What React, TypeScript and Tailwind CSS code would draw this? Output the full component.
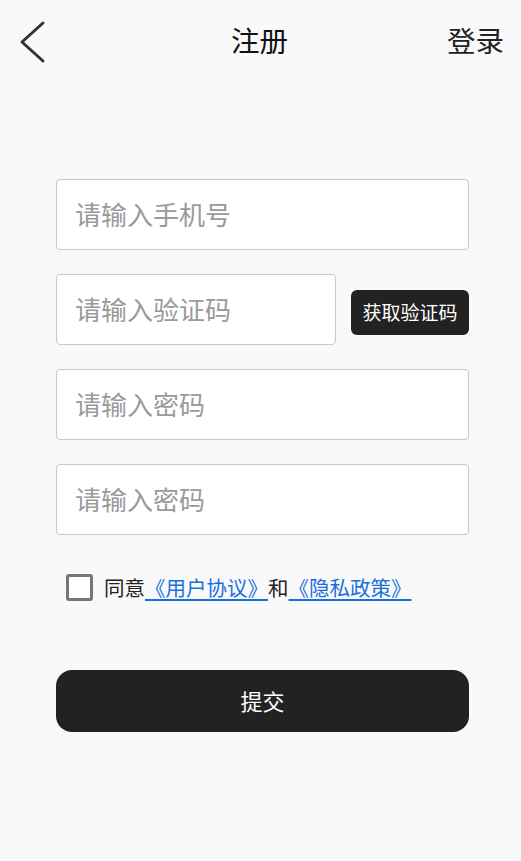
import React, { useState } from 'react';

const font = { fontFamily: '"Noto Sans CJK SC", "Noto Sans", sans-serif' };

const Field = ({ placeholder, type = 'text', className = '' }: { placeholder: string; type?: string; className?: string }) => (
  <input
    type={type}
    placeholder={placeholder}
    className={`h-[71px] rounded-[4px] border border-[#c8c8c8] bg-white pl-[18px] pr-[12px] pb-[3px] text-[26px] text-[#333] placeholder:text-[#9a9a9a] outline-none ${className}`}
  />
);

export default function App() {
  const [agree, setAgree] = useState(false);

  return (
    <div className="min-h-[861px] w-full bg-[#f9f9f9]" style={font}>
      {/* Header */}
      <div className="flex h-[84px] items-center justify-between pl-[18px] pr-[17px]">
        <button className="flex h-[44px] w-[30px] items-center" aria-label="back">
          <svg width="28" height="44" viewBox="0 0 28 44" fill="none">
            <path d="M25 3 L4 22 L25 41" stroke="#333" strokeWidth="3" strokeLinecap="round" strokeLinejoin="round" />
          </svg>
        </button>
        <div className="pb-[3px] pl-[24px] text-[28.5px] text-[#111]">注册</div>
        <button className="pb-[3px] text-[28.5px] text-[#222]">登录</button>
      </div>

      {/* Form */}
      <div className="mt-[95px] flex flex-col gap-[24px] pl-[56px] pr-[52px]">
        <Field placeholder="请输入手机号" className="w-full" />
        <div className="flex items-center justify-between">
          <Field placeholder="请输入验证码" className="w-[280px]" />
          <button className="mt-[6px] h-[45px] w-[118px] rounded-[6px] bg-[#222] text-[19px] text-white">获取验证码</button>
        </div>
        <Field placeholder="请输入密码" type="password" className="w-full" />
        <Field placeholder="请输入密码" type="password" className="w-full" />
      </div>

      {/* Agreement */}
      <div className="mt-[37px] flex items-center pl-[66px] text-[20.5px] text-[#222]">
        <button
          onClick={() => setAgree(!agree)}
          className="mr-[11px] h-[27px] w-[27px] rounded-[3px] border-[3px] border-[#767676] bg-white"
          aria-label="agree"
        />
        <span>同意</span>
        <a href="#" className="text-[#1a6fe0] underline underline-offset-[3px]">《用户协议》</a>
        <span>和</span>
        <a href="#" className="text-[#1a6fe0] underline underline-offset-[3px]">《隐私政策》</a>
      </div>

      {/* Submit */}
      <div className="mt-[67px] pl-[56px] pr-[52px]">
        <button className="h-[62px] w-full rounded-[16px] bg-[#222] text-[22px] text-white">提交</button>
      </div>
    </div>
  );
}
